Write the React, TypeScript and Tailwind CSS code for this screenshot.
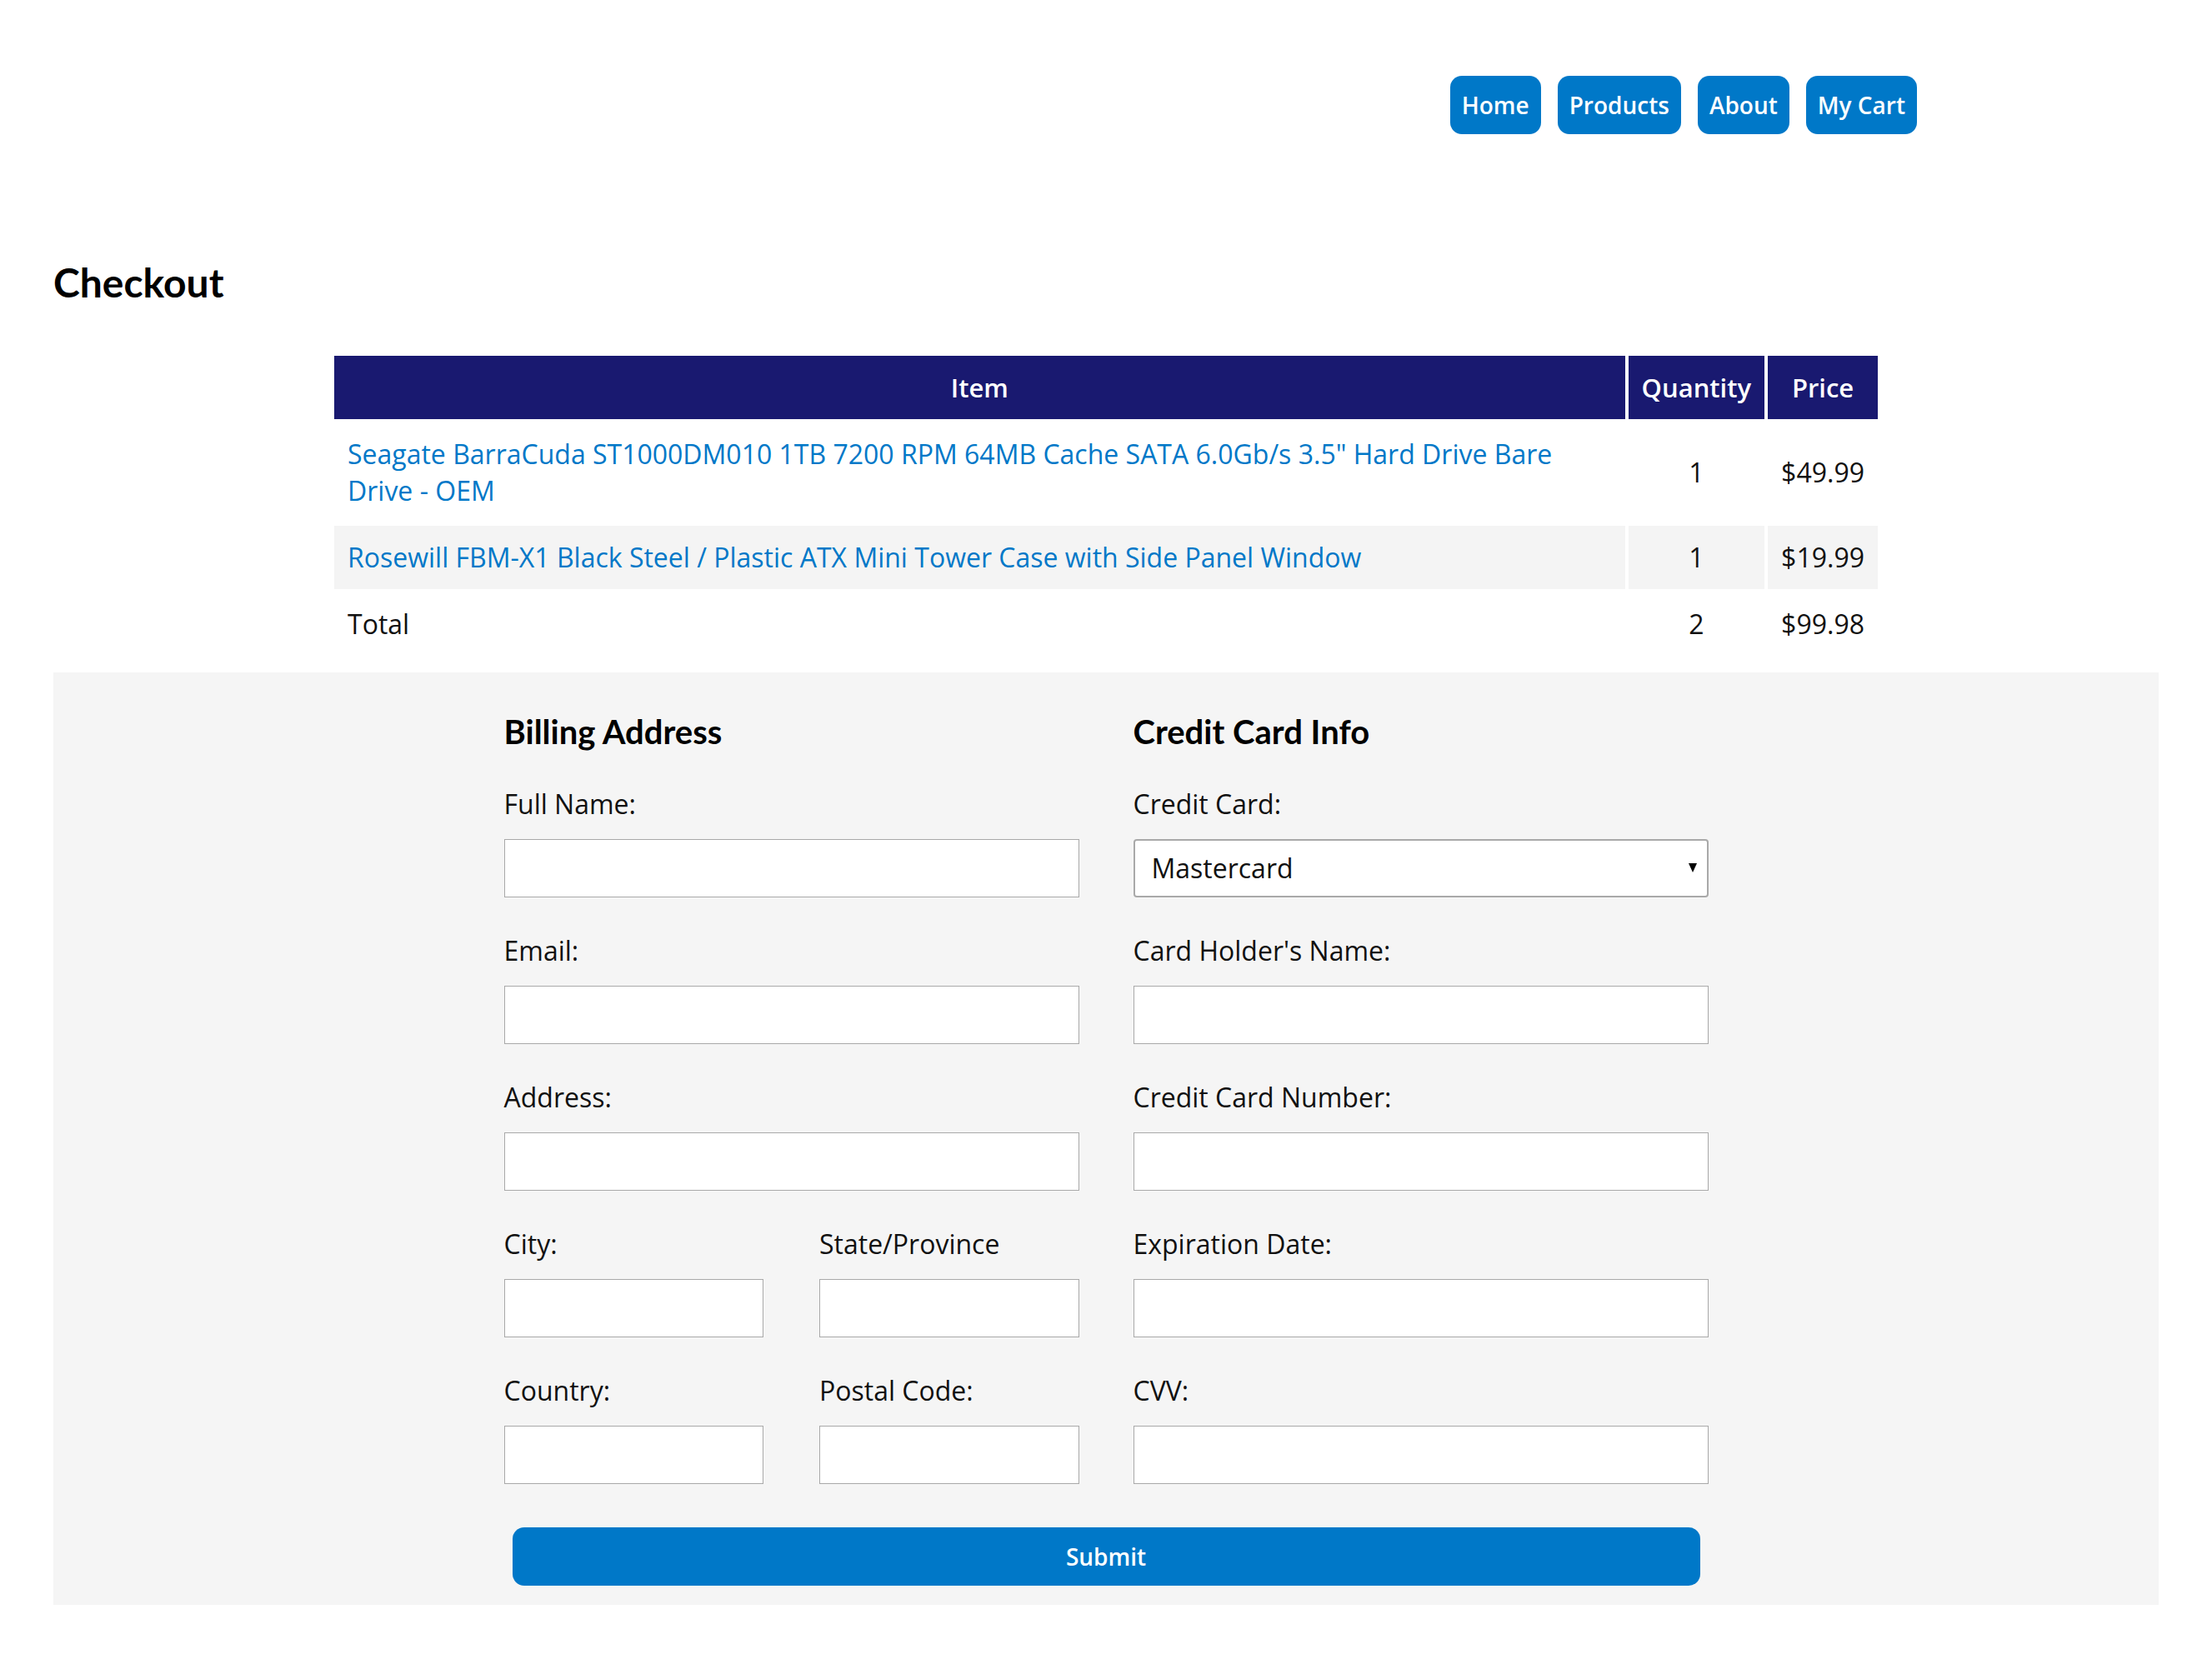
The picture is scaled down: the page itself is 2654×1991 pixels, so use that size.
import React from "react";

const items = [
  {
    name: 'Seagate BarraCuda ST1000DM010 1TB 7200 RPM 64MB Cache SATA 6.0Gb/s 3.5" Hard Drive Bare Drive - OEM',
    qty: 1,
    price: "$49.99",
  },
  {
    name: "Rosewill FBM-X1 Black Steel / Plastic ATX Mini Tower Case with Side Panel Window",
    qty: 1,
    price: "$19.99",
  },
];

function Field({ label, children }: { label: string; children?: React.ReactNode }) {
  return (
    <div className="mb-[42px]">
      <label className="block text-[32px] leading-[44px] text-[#111] mb-[20px]">{label}</label>
      {children ?? (
        <input type="text" className="block w-full h-[70px] bg-white border border-[#a9a9a9] outline-none" />
      )}
    </div>
  );
}

export default function App() {
  const navLinks = ["Home", "Products", "About", "My Cart"];

  return (
    <div className="min-h-screen bg-white font-['Open_Sans',sans-serif] text-[#111]">
      <header className="flex justify-end gap-[20px] pt-[91px] pr-[354px]">
        {navLinks.map((link) => (
          <a
            key={link}
            href="#"
            className="h-[70px] px-[14px] flex items-center rounded-[14px] bg-[#0078c8] text-white text-[28px] font-semibold"
          >
            {link}
          </a>
        ))}
      </header>

      <main className="px-[64px]">
        <h1 className="mt-[149px] font-['Lato',sans-serif] font-bold text-[48px] leading-[58px] text-black">
          Checkout
        </h1>

        <table className="mx-auto mt-[55px] mb-[16px] w-[1860px] border-separate border-spacing-[4px] text-[32px] leading-[44px]">
          <thead>
            <tr className="bg-[#191970] text-white text-[31px]">
              <th className="p-4 font-semibold text-center">Item</th>
              <th className="p-4 font-semibold text-center">Quantity</th>
              <th className="p-4 font-semibold text-center">Price</th>
            </tr>
          </thead>
          <tbody>
            {items.map((item, i) => (
              <tr key={item.name} className={i % 2 === 1 ? "bg-[#f4f4f4]" : ""}>
                <td className="p-4 text-left">
                  <a href="#" className="text-[#0078c8]">
                    {item.name}
                  </a>
                </td>
                <td className="p-4 text-center">{item.qty}</td>
                <td className="p-4 text-left">{item.price}</td>
              </tr>
            ))}
            <tr>
              <td className="p-4 text-left">Total</td>
              <td className="p-4 text-center">2</td>
              <td className="p-4 text-left">$99.98</td>
            </tr>
          </tbody>
        </table>

        <section className="bg-[#f5f5f5] pt-[47px] pb-[23px]">
          <form className="w-[1445px] mx-auto" onSubmit={(e) => e.preventDefault()}>
            <div className="grid grid-cols-[690px_690px] gap-x-[65px]">
              <div>
                <h3 className="font-['Lato',sans-serif] font-bold text-[40px] leading-[48px] text-black mb-[41px]">
                  Billing Address
                </h3>
                <Field label="Full Name:" />
                <Field label="Email:" />
                <Field label="Address:" />
                <div className="grid grid-cols-2 gap-x-[67px]">
                  <Field label="City:" />
                  <Field label="State/Province" />
                  <Field label="Country:" />
                  <Field label="Postal Code:" />
                </div>
              </div>

              <div>
                <h3 className="font-['Lato',sans-serif] font-bold text-[40px] leading-[48px] text-black mb-[41px]">
                  Credit Card Info
                </h3>
                <Field label="Credit Card:">
                  <div className="relative">
                    <select className="block w-full h-[70px] appearance-none bg-white border-2 border-[#a9a9a9] rounded-[4px] pl-[20px] text-[32px] text-[#111] outline-none">
                      <option>Mastercard</option>
                      <option>Visa</option>
                      <option>American Express</option>
                    </select>
                    <span className="absolute right-[14px] top-[29px] w-0 h-0 border-l-[5.5px] border-r-[5.5px] border-t-[11px] border-l-transparent border-r-transparent border-t-black pointer-events-none" />
                  </div>
                </Field>
                <Field label="Card Holder's Name:" />
                <Field label="Credit Card Number:" />
                <Field label="Expiration Date:" />
                <Field label="CVV:" />
              </div>
            </div>

            <button
              type="submit"
              className="block mx-[10px] mt-[10px] w-[1425px] h-[70px] rounded-[14px] bg-[#0078c8] text-white text-[28px] font-semibold"
            >
              Submit
            </button>
          </form>
        </section>
      </main>
    </div>
  );
}
